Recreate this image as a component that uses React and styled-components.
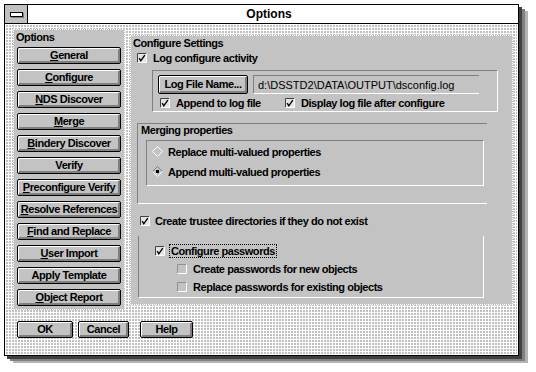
import React from "react"
import styled, { createGlobalStyle } from "styled-components"

const GlobalStyle = createGlobalStyle`
  body {
    margin: 0;
    background: #fff;
    font-family: "Liberation Sans", Arial, sans-serif;
    font-size: 11px;
    font-weight: bold;
    letter-spacing: -0.45px;
    color: #000;
  }
`

const dither = `
  background-color: #c0c0c0;
  background-image: linear-gradient(90deg, #fff 1px, transparent 1px),
    linear-gradient(#fff 1px, transparent 1px);
  background-size: 3px 3px;
`

const Screen = styled.div`
  width: 536px;
  height: 372px;
  box-sizing: border-box;
  padding: 4px 0 0 4px;
`

const Window = styled.div`
  width: 515px;
  height: 352px;
  box-sizing: border-box;
  border: 1px solid #000;
  display: flex;
  flex-direction: column;
  box-shadow: 3px 3px 0 #404040, 6px 5px 0 #808080, 9px 7px 0 #b4b4b4;
`

const TitleBar = styled.div`
  height: 19px;
  box-sizing: border-box;
  border-bottom: 1px solid #000;
  background: #fff;
  display: flex;
`

const SysBox = styled.div`
  width: 23px;
  box-sizing: border-box;
  border-right: 1px solid #000;
  background: #c0c0c0;
  display: flex;
  align-items: center;
  justify-content: center;
`

const SysDash = styled.div`
  width: 11px;
  height: 3px;
  background: #fff;
  border: 1px solid #000;
  box-shadow: 1px 1px 0 #808080;
`

const Title = styled.div`
  flex: 1;
  text-align: center;
  line-height: 18px;
  font-size: 12px;
  letter-spacing: 0;
  padding-right: 8px;
`

const Body = styled.div`
  flex: 1;
  ${dither}
  padding: 5px 0 0 8px;
  box-shadow: inset 1px 1px 0 #fff, inset -1px 0 0 #fff;
`

const TopRow = styled.div`
  display: flex;
  align-items: flex-start;
`

const Panel = styled.div`
  box-sizing: border-box;
  width: ${p => p.$w}px;
  height: ${p => p.$h}px;
  margin: ${p => p.$m || 0};
  border: 1px dotted #fff;
  background: #c3c3c3;
  display: flex;
  flex-direction: column;
`

const PanelLabel = styled.div`
  line-height: 13px;
  padding-left: ${p => p.$pl || 2}px;
  margin: ${p => p.$m || 0};
`

const ButtonList = styled.div`
  display: flex;
  flex-direction: column;
  gap: 5px;
  padding-left: 3px;
  margin-top: 3px;
`

const Btn = styled.button`
  box-sizing: border-box;
  width: ${p => p.$w}px;
  height: ${p => p.$h || 17}px;
  margin: 0 0 0 ${p => p.$ml || 0}px;
  padding: 0 0 1px 0;
  font: inherit;
  font-weight: bold;
  letter-spacing: inherit;
  color: #000;
  background: #c3c3c3;
  border: 1px solid #000;
  border-radius: 2px;
  box-shadow: inset 1px 1px 0 #fff, inset -1px -1px 0 #808080,
    inset -2px -2px 0 #808080;
  text-align: center;
  white-space: nowrap;
`

const Row = styled.div`
  display: flex;
  align-items: center;
  height: 13px;
  margin: ${p => p.$m || 0};
  gap: ${p => p.$gap || 6}px;
  white-space: nowrap;
`

const Item = styled.div`
  display: flex;
  align-items: center;
  gap: 6px;
  width: ${p => (p.$w ? `${p.$w}px` : "auto")};
`

const Etched = styled.div`
  box-sizing: border-box;
  width: ${p => p.$w}px;
  margin: ${p => p.$m || 0};
  padding: ${p => p.$p || 0};
  border: 1px solid;
  border-color: #808080 #fff #fff #808080;
  display: flex;
  flex-direction: column;
  gap: ${p => p.$gap || 0}px;
`

const MergeGroup = styled.div`
  box-sizing: border-box;
  width: 350px;
  margin: 11px 0 0 6px;
  padding-bottom: 17px;
  border-top: 1px solid #808080;
  border-left: 1px solid #808080;
  border-bottom: 1px solid #fff;
`

const PassGroup = styled.div`
  box-sizing: border-box;
  width: 346px;
  margin: 9px 0 0 7px;
  padding: 8px 0 4px 0;
  border-left: 1px solid #808080;
  border-right: 1px solid #fff;
  border-bottom: 1px solid #fff;
  display: flex;
  flex-direction: column;
  gap: 5px;
`

const FileRow = styled.div`
  display: flex;
  align-items: center;
  gap: 5px;
  height: 20px;
`

const Field = styled.div`
  box-sizing: border-box;
  width: 226px;
  height: 19px;
  padding-left: 4px;
  line-height: 18px;
  font-weight: normal;
  letter-spacing: 0;
  border-top: 1px solid #808080;
  border-left: 1px solid #808080;
  border-bottom: 1px solid #fff;
`

const Focus = styled.span`
  border: 1px dotted #000;
  padding: 0 1px;
  line-height: 12px;
  margin-left: -2px;
`

const BottomRow = styled.div`
  display: flex;
  gap: 5px;
  margin: 11px 0 0 4px;
`

const CheckBox = ({ checked }) => (
  <svg width="10" height="10" viewBox="0 0 10 10" style={{ flex: "none" }}>
    <rect x="0" y="0" width="10" height="10" fill={checked ? "#e4e4e4" : "#c3c3c3"} />
    <path d="M0.5 9.5V0.5H9.5" fill="none" stroke={checked ? "#404040" : "#909090"} />
    <path d="M9.5 0.5V9.5H0.5" fill="none" stroke="#fff" />
    {checked && (
      <path d="M2.2 5.2L3.8 7.8L7.8 2.2" fill="none" stroke="#000" strokeWidth="1.4" />
    )}
  </svg>
)

const Radio = ({ on }) => (
  <svg width="11" height="11" viewBox="0 0 11 11" style={{ flex: "none" }}>
    <path d="M0.5 5.5L5.5 0.5L10.5 5.5" fill="none" stroke={on ? "#808080" : "#fff"} />
    <path d="M0.5 5.5L5.5 10.5L10.5 5.5" fill="none" stroke="#fff" />
    {on && <rect x="4" y="4" width="3" height="3" fill="#000" />}
  </svg>
)

const optionButtons = [
  ["G", "eneral"],
  ["C", "onfigure"],
  ["N", "DS Discover"],
  ["M", "erge"],
  ["B", "indery Discover"],
  ["", "Verify"],
  ["P", "reconfigure Verify"],
  ["R", "esolve References"],
  ["F", "ind and Replace"],
  ["U", "ser Import"],
  ["", "Apply Template"],
  ["O", "bject Report"],
]

const App = () => (
  <Screen>
    <GlobalStyle />
    <Window>
      <TitleBar>
        <SysBox>
          <SysDash />
        </SysBox>
        <Title>Options</Title>
      </TitleBar>
      <Body>
        <TopRow>
          <Panel $w={112} $h={281}>
            <PanelLabel $m="1px 0 0 0">Options</PanelLabel>
            <ButtonList>
              {optionButtons.map(([k, rest]) => (
                <Btn key={k + rest} $w={104}>
                  {k && <u>{k}</u>}
                  {rest}
                </Btn>
              ))}
            </ButtonList>
          </Panel>

          <Panel $w={383} $h={270} $m="6px 0 0 5px">
            <PanelLabel $m="1px 0 0 0">Configure Settings</PanelLabel>
            <Row $m="1px 0 0 6px">
              <CheckBox checked />
              <span>Log configure activity</span>
            </Row>

            <Etched $w={346} $m="6px 0 0 21px" $p="3px 0 0 5px">
              <FileRow>
                <Btn $w={90} $h={19}>Log File Name...</Btn>
                <Field>d:\DSSTD2\DATA\OUTPUT\dsconfig.log</Field>
              </FileRow>
              <Row $m="2px 0 2px 2px" $gap={0}>
                <Item $w={119}>
                  <CheckBox checked />
                  <span>Append to log file</span>
                </Item>
                <Item>
                  <CheckBox checked />
                  <span>Display log file after configure</span>
                </Item>
              </Row>
            </Etched>

            <MergeGroup>
              <PanelLabel $pl={3}>Merging properties</PanelLabel>
              <Etched $w={338} $m="3px 0 0 8px" $p="4px 0 7px 5px" $gap={7}>
                <Row $gap={5}>
                  <Radio />
                  <span>Replace multi-valued properties</span>
                </Row>
                <Row $gap={5}>
                  <Radio on />
                  <span>Append multi-valued properties</span>
                </Row>
              </Etched>
            </MergeGroup>

            <Row $m="10px 0 0 9px" $gap={5}>
              <CheckBox checked />
              <span>Create trustee directories if they do not exist</span>
            </Row>

            <PassGroup>
              <Row $m="0 0 0 16px">
                <CheckBox checked />
                <Focus>Configure passwords</Focus>
              </Row>
              <Row $m="0 0 0 38px">
                <CheckBox />
                <span>Create passwords for new objects</span>
              </Row>
              <Row $m="0 0 0 38px">
                <CheckBox />
                <span>Replace passwords for existing objects</span>
              </Row>
            </PassGroup>
          </Panel>
        </TopRow>

        <BottomRow>
          <Btn $w={56}>OK</Btn>
          <Btn $w={51}>Cancel</Btn>
          <Btn $w={53} $ml={6}>Help</Btn>
        </BottomRow>
      </Body>
    </Window>
  </Screen>
)

export default App
